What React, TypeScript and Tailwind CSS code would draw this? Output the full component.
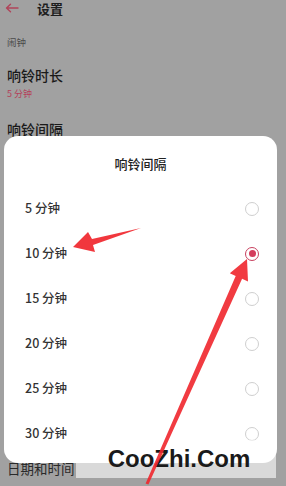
import React from "react";

const options = ["5 分钟", "10 分钟", "15 分钟", "20 分钟", "25 分钟", "30 分钟"];

export default function App() {
  const cjk = { fontFamily: '"Noto Sans CJK SC", "Noto Sans", sans-serif' };
  return (
    <div
      className="relative w-[286px] h-[486px] overflow-hidden bg-[#a1a1a1]"
      style={cjk}
    >
      {/* background page */}
      <div className="flex flex-col">
        <div className="flex items-center h-[17px] pl-[5px]">
          <svg width="14" height="10" viewBox="0 0 14 10" className="mt-[-1px]">
            <path d="M13 5H2M5.5 1.2L1.5 5l4 3.8" fill="none" stroke="#b0445a" strokeWidth="1.4" strokeLinecap="round" strokeLinejoin="round" />
          </svg>
          <span className="ml-[18px] text-[13px] leading-[17px] font-bold text-[#1e1e1e]">设置</span>
        </div>
        <div className="pl-[7px] mt-[18px] text-[9.5px] leading-[14px] text-[#4a4a4a]">闹钟</div>
        <div className="pl-[7px] mt-[16px] text-[14px] leading-[20px] font-medium text-[#1a1a1a]">响铃时长</div>
        <div className="pl-[7px] mt-[3px] text-[9px] leading-[12px] text-[#b4405a]">5 分钟</div>
        <div className="pl-[7px] mt-[19px] text-[14px] leading-[20px] font-medium text-[#1a1a1a]">响铃间隔</div>
        <div className="pl-[7px] mt-[320px] text-[13.5px] leading-[18px] text-[#2a2a2a]">日期和时间</div>
      </div>

      {/* dialog */}
      <div className="absolute left-[4px] top-[136px] w-[273px] h-[327px] rounded-[14px] bg-white flex flex-col">
        <div className="mt-[18px] h-[20px] text-center text-[13px] leading-[20px] font-medium text-[#222]">响铃间隔</div>
        <div className="mt-[12px] flex flex-col">
          {options.map((o, i) => (
            <div key={o} className="flex items-center justify-between h-[45px] pl-[21px] pr-[18px]">
              <span className="text-[12.5px] font-medium text-[#333]">{o}</span>
              {i === 1 ? (
                <span className="w-[14px] h-[14px] rounded-full border-[1.5px] border-[#c8405e] flex items-center justify-center">
                  <span className="w-[7px] h-[7px] rounded-full bg-[#d43c5c]" />
                </span>
              ) : (
                <span className="w-[14px] h-[14px] rounded-full border-[1.5px] border-[#cfcfcf]" />
              )}
            </div>
          ))}
        </div>
      </div>

      {/* watermark */}
      <div className="absolute left-[76px] top-[440px] w-[200px] h-[38px] bg-white/60 flex items-center justify-center">
        <span
          className="text-[24px] font-bold text-[#1a1a1a] leading-none ml-[6px]"
          style={{ fontFamily: '"Liberation Sans", Arial, sans-serif' }}
        >
          CooZhi.Com
        </span>
      </div>

      {/* arrows */}
      <svg className="absolute left-0 top-0" width="286" height="486" viewBox="0 0 286 486">
        <polygon points="141,228 92,239 88,232 73,247 95,252 93,245" fill="#f0262c" opacity="0.92" />
        <polygon points="145.6,483.4 235.7,275.9 229.8,273.2 247,259 248,281.4 242.1,278.7 148.4,484.6" fill="#f0262c" opacity="0.9" />
      </svg>
    </div>
  );
}
